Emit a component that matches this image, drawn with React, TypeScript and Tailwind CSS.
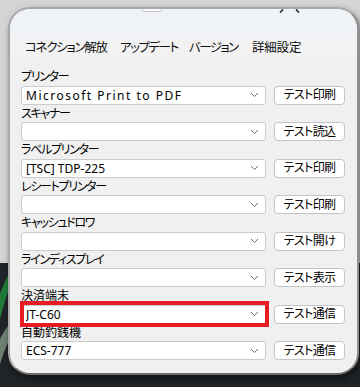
import React from "react";

/* ---------------- DEVICE ROW ---------------- */
type Row = {
  label: string;
  value: string;
  button: string;
  marked?: boolean;
  wide?: boolean;
  kanji?: boolean;
};

const rows: Row[] = [
  { label: "プリンター", value: "Microsoft Print to PDF", button: "テスト印刷", wide: true },
  { label: "スキャナー", value: "", button: "テスト読込" },
  { label: "ラベルプリンター", value: "[TSC] TDP-225", button: "テスト印刷" },
  { label: "レシートプリンター", value: "", button: "テスト印刷" },
  { label: "キャッシュドロワ", value: "", button: "テスト開け" },
  { label: "ラインディスプレイ", value: "", button: "テスト表示" },
  { label: "決済端末", value: "JT-C60", button: "テスト通信", marked: true, kanji: true },
  { label: "自動釣銭機", value: "ECS-777", button: "テスト通信", kanji: true },
];

const Chevron = () => (
  <svg width="9" height="6" viewBox="0 0 9 6" className="shrink-0">
    <polyline points="1,1 4.5,4.5 8,1" fill="none" stroke="#6b6b6b" strokeWidth="1" />
  </svg>
);

const DeviceRow = ({ label, value, button, marked, wide, kanji }: Row) => (
  <div>
    <div
      className={`h-[17.5px] leading-[17.5px] text-[12px] text-black ${
        kanji ? "tracking-[0px]" : "tracking-[-1.3px]"
      }`}
    >
      {label}
    </div>
    <div className="flex gap-[8px]">
      <div className="relative w-[245px] h-[19px]">
        <div className="h-full flex items-center pl-[4px] pr-[6px] bg-white border border-[#cbcbcb] rounded-[3px]">
          <span
            className={`flex-1 text-[12px] leading-[17px] text-black whitespace-nowrap overflow-hidden ${
              wide ? "tracking-[1.5px]" : "tracking-[0px]"
            }`}
          >
            {value}
          </span>
          <Chevron />
        </div>
        {marked && (
          <div className="absolute -left-[1px] -top-[4px] -right-[3px] -bottom-[3px] border-4 border-[#e81c24] pointer-events-none" />
        )}
      </div>
      <button className="w-[71px] h-[19px] flex items-center justify-center bg-white border border-[#c4c4c4] rounded-[4px] text-[12px] tracking-[-0.6px] leading-none text-black">
        {button}
      </button>
    </div>
  </div>
);

/* ---------------- BACKDROP BITS ---------------- */
const Swoosh = () => (
  <svg width="14" height="110" viewBox="0 0 14 110" className="absolute left-0 top-[258px]">
    <path d="M-6,75 C-2,50 4,30 14,14" fill="none" stroke="#1f7a3a" strokeWidth="7" />
    <path d="M-4,104 C0,90 4,80 12,70" fill="none" stroke="#6f7f72" strokeWidth="9" />
  </svg>
);

/* ===================== MAIN ===================== */
export default function App() {
  const menu = [
    { t: "コネクション解放", c: "w-[95px] tracking-[-1.3px]" },
    { t: "アップデート", c: "w-[69px] tracking-[-1.5px]" },
    { t: "バージョン", c: "w-[63px] tracking-[-1.6px]" },
    { t: "詳細設定", c: "tracking-[-0.2px]" },
  ];

  return (
    <div className="relative w-[360px] h-[387px] overflow-hidden bg-[linear-gradient(to_bottom,#d4d4d4_0,#d4d4d4_263px,#202327_263px)] font-['Noto_Sans','Noto_Sans_CJK_JP',sans-serif] [font-feature-settings:'palt']">
      <Swoosh />

      {/* window */}
      <div className="relative ml-[8px] mt-[7px] w-[351px] h-[368px] rounded-[22px] border-[2.5px] border-[#a8a8a8] border-b-[#6d6d6d] border-r-[#8e8e8e] bg-[#f0f0f0] overflow-hidden shadow-[2px_3px_6px_rgba(0,0,0,0.5)]">
        {/* title strip */}
        <div className="relative h-[26.5px] bg-[#eff3f7]">
          <div className="absolute left-[132px] top-0 w-[20px] h-[3px] border border-t-0 border-[#c3c7cc] rounded-b-[2px] bg-white" />
          <svg width="22" height="5" viewBox="0 0 22 5" className="absolute left-[269px] top-0">
            <line x1="4" y1="0.5" x2="1" y2="3.5" stroke="#222" strokeWidth="1.6" />
            <line x1="17" y1="0.5" x2="20" y2="3.5" stroke="#222" strokeWidth="1.6" />
          </svg>
        </div>

        {/* menu */}
        <div className="h-[26px] flex items-center pl-[15px] bg-[#f2f2f2] text-[12.5px] text-[#111]">
          {menu.map((m) => (
            <span key={m.t} className={`shrink-0 ${m.c}`}>
              {m.t}
            </span>
          ))}
        </div>

        {/* device list */}
        <div className="pl-[11px] pt-[6.5px]">
          {rows.map((r) => (
            <DeviceRow key={r.label} {...r} />
          ))}
        </div>
      </div>
    </div>
  );
}
